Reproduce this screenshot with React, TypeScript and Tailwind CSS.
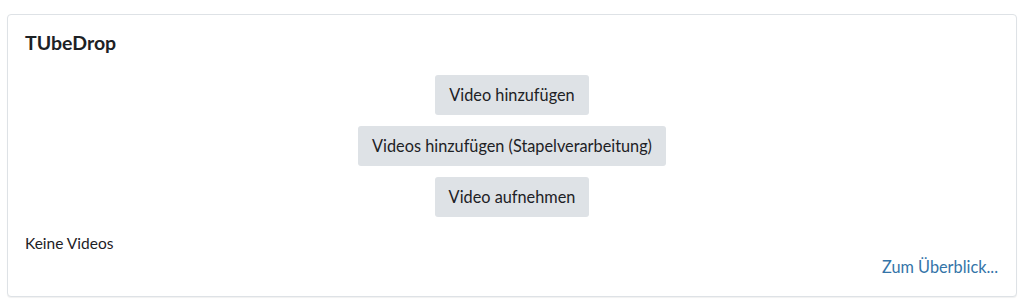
import React from 'react';

const buttons = ['Video hinzufügen', 'Videos hinzufügen (Stapelverarbeitung)', 'Video aufnehmen'];

const App: React.FC = () => {
  return (
    <div className="min-h-[305px] bg-white pl-[7px] pr-[6px] pt-[14px] font-['Lato',sans-serif] text-[#1d2125]">
      <div className="w-[1010px] rounded-[4px] border border-[#dee2e6] bg-white shadow-[0_1px_1px_rgba(0,0,0,0.06)] px-[17px] pt-[16px] pb-[18px]">
        <h5 className="text-[19.5px] font-bold leading-[24px]">TUbeDrop</h5>

        <div className="mt-[20px] flex flex-col items-center gap-[11px]">
          {buttons.map((label) => (
            <button
              key={label}
              className="h-[40px] rounded-[3px] bg-[#dee2e6] px-[14px] text-[16.3px] leading-[40px] text-[#1d2125]"
            >
              {label}
            </button>
          ))}
        </div>

        <p className="mt-[15px] text-[15.5px] leading-[22px]">Keine Videos</p>

        <div className="mt-[2px] flex justify-end pr-[1px]">
          <a href="#" className="text-[16.3px] leading-[22px] text-[#3474a8]">
            Zum Überblick...
          </a>
        </div>
      </div>
    </div>
  );
};

export default App;
